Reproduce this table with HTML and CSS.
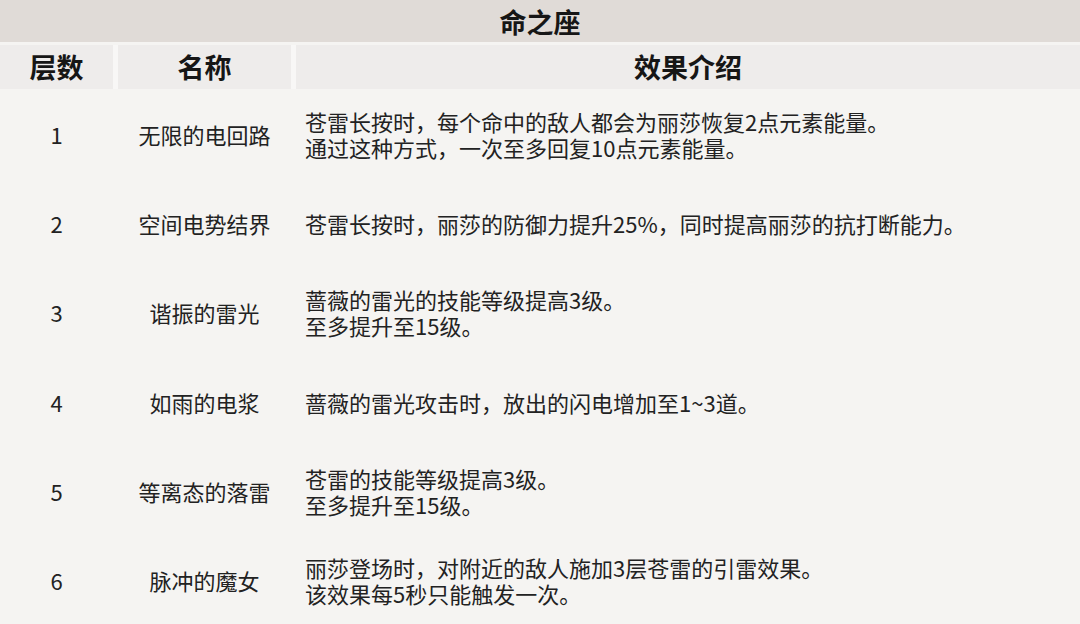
FILE: index.html
```html
<!DOCTYPE html>
<html lang="zh-CN">
<head>
<meta charset="utf-8">
<title>命之座</title>
<link rel="stylesheet" href="styles.css">
</head>
<body>
<div class="table">
  <div class="title">命之座</div>
  <div class="row head">
    <div class="cell">层数</div>
    <div class="cell">名称</div>
    <div class="cell">效果介绍</div>
  </div>
  <div class="row">
    <div class="cell num">1</div>
    <div class="cell name">无限的电回路</div>
    <div class="cell desc">苍雷长按时，每个命中的敌人都会为丽莎恢复2点元素能量。<br>通过这种方式，一次至多回复10点元素能量。</div>
  </div>
  <div class="row">
    <div class="cell num">2</div>
    <div class="cell name">空间电势结界</div>
    <div class="cell desc">苍雷长按时，丽莎的防御力提升25%，同时提高丽莎的抗打断能力。</div>
  </div>
  <div class="row">
    <div class="cell num">3</div>
    <div class="cell name">谐振的雷光</div>
    <div class="cell desc">蔷薇的雷光的技能等级提高3级。<br>至多提升至15级。</div>
  </div>
  <div class="row">
    <div class="cell num">4</div>
    <div class="cell name">如雨的电浆</div>
    <div class="cell desc">蔷薇的雷光攻击时，放出的闪电增加至1~3道。</div>
  </div>
  <div class="row">
    <div class="cell num">5</div>
    <div class="cell name">等离态的落雷</div>
    <div class="cell desc">苍雷的技能等级提高3级。<br>至多提升至15级。</div>
  </div>
  <div class="row">
    <div class="cell num">6</div>
    <div class="cell name">脉冲的魔女</div>
    <div class="cell desc">丽莎登场时，对附近的敌人施加3层苍雷的引雷效果。<br>该效果每5秒只能触发一次。</div>
  </div>
</div>
</body>
</html>
```

FILE: styles.css
```css
html, body {
  margin: 0;
  padding: 0;
  background: #f5f4f2;
}

body {
  font-family: "Noto Sans CJK SC", "Noto Sans", sans-serif;
  color: #222;
  width: 1080px;
  height: 624px;
  overflow: hidden;
}

.table {
  display: flex;
  flex-direction: column;
}

.title {
  height: 42px;
  background: #e0dbd7;
  display: flex;
  align-items: center;
  justify-content: center;
  font-size: 27px;
  font-weight: 700;
  color: #161616;
  margin-bottom: 3px;
}

.row {
  display: grid;
  grid-template-columns: 113px 173px 1fr;
  column-gap: 5px;
  height: 89.3px;
  align-items: center;
}

.row.head {
  height: 44px;
  background: #f8f7f6;
  align-items: stretch;
}

.head .cell {
  background: #eeeceb;
  display: flex;
  align-items: center;
  justify-content: center;
  font-size: 27px;
  font-weight: 700;
  color: #161616;
}

.cell {
  font-size: 22px;
  line-height: 26px;
}

.num, .name {
  text-align: center;
}

.desc {
  padding-left: 9px;
}
```
